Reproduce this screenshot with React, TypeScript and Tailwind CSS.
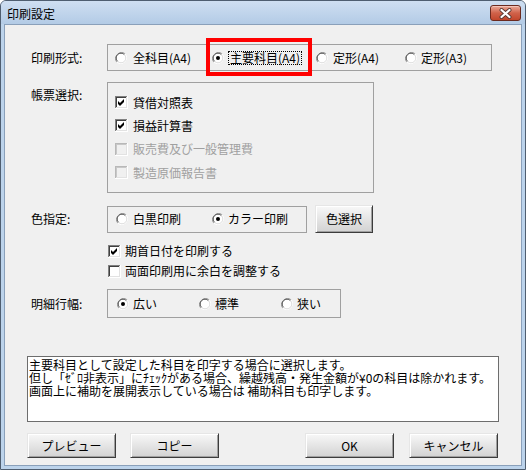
import React from "react";

function Radio({ checked }: { checked?: boolean }) {
  return (
    <svg width="12" height="12" viewBox="0 0 12 12" className="shrink-0">
      <circle cx="6" cy="6" r="5.5" fill="#fff" />
      <path d="M10.2 1.8 A6 6 0 0 0 1.8 10.2" stroke="#9a9a9a" strokeWidth="1" fill="none" />
      <path d="M9.4 2.6 A4.8 4.8 0 0 0 2.6 9.4" stroke="#555" strokeWidth="1" fill="none" />
      <path d="M1.8 10.2 A6 6 0 0 0 10.2 1.8" stroke="#ffffff" strokeWidth="1" fill="none" />
      <path d="M2.6 9.4 A4.8 4.8 0 0 0 9.4 2.6" stroke="#dcdcdc" strokeWidth="1" fill="none" />
      {checked && <circle cx="6" cy="6" r="2" fill="#000" />}
    </svg>
  );
}

function Check({ checked, disabled }: { checked?: boolean; disabled?: boolean }) {
  const o = disabled ? "#b8b8b8" : "#808080";
  const i = disabled ? "#c8c8c8" : "#404040";
  const fill = disabled ? "#f0f0f0" : "#ffffff";
  return (
    <svg width="13" height="13" viewBox="0 0 13 13" shapeRendering="crispEdges" className="shrink-0">
      <rect x="0" y="0" width="13" height="13" fill="#fff" />
      <rect x="0" y="0" width="12" height="1" fill={o} />
      <rect x="0" y="0" width="1" height="12" fill={o} />
      <rect x="1" y="1" width="10" height="1" fill={i} />
      <rect x="1" y="1" width="1" height="10" fill={i} />
      <rect x="1" y="11" width="11" height="1" fill="#e2e2e2" />
      <rect x="11" y="1" width="1" height="11" fill="#e2e2e2" />
      <rect x="2" y="2" width="9" height="9" fill={fill} />
      {checked && (
        <polygon points="3,5 5,7 9,3 9,6 5,10 3,8" fill={disabled ? "#a0a0a0" : "#000"} shapeRendering="auto" />
      )}
    </svg>
  );
}

function Btn({ children, w }: { children: React.ReactNode; w: string }) {
  return (
    <div
      className={`${w} h-full flex items-center justify-center border border-t-[#e6e6e6] border-l-[#e6e6e6] border-r-[#3c3c3c] border-b-[#3c3c3c] bg-linear-to-b from-[#f8f8f8] to-[#d2d2d2] shadow-[inset_1px_1px_0_#ffffff,inset_-1px_-1px_0_#a0a0a0] leading-[14px]`}
    >
      {children}
    </div>
  );
}

export default function App() {
  return (
    <div className="w-[526px] h-[470px] flex flex-col bg-[#bcd3eb] border border-[#4f5e70] rounded-t-[6px] overflow-hidden font-['Noto_Sans_CJK_JP','Liberation_Sans',sans-serif] text-[12px] text-black">
      {/* title bar */}
      <div className="h-[23px] shrink-0 flex items-start justify-between pl-[6px] pr-[4px] pt-[4px] bg-linear-to-b from-[#cfdff1] to-[#b3cbe6]">
        <span className="leading-[14px] mt-[2px]">印刷設定</span>
        <div className="w-[31px] h-[16px] rounded-[3px] border border-[#6b2a1f] bg-linear-to-b from-[#e8a898] via-[#d0624a] to-[#c2462c] flex items-center justify-center shadow-[inset_0_1px_0_#f3c4b8]">
          <svg width="13" height="11" viewBox="0 0 13 11">
            <path d="M2.5 2 L10.5 9 M10.5 2 L2.5 9" stroke="#5a3a34" strokeWidth="4" strokeLinecap="round" />
            <path d="M2.5 2 L10.5 9 M10.5 2 L2.5 9" stroke="#ffffff" strokeWidth="2.2" strokeLinecap="round" />
          </svg>
        </div>
      </div>

      {/* client area frame */}
      <div className="flex-1 flex px-[3px] pb-[3px]">
        <div className="flex-1 flex flex-col border border-[#8aa0ba] bg-[#f0f0f0] pt-[19px]">
          {/* 印刷形式 */}
          <div className="flex items-center pl-[26px]">
            <div className="w-[76px] leading-[14px]">印刷形式:</div>
            <div className="w-[385px] h-[27px] border border-[#a0a0a0] flex items-center pl-[7px]">
              <div className="w-[97px] flex items-center">
                <Radio />
                <span className="ml-[6px] leading-[14px]">全科目(A4)</span>
              </div>
              <div className="w-[104px] flex items-center relative">
                <Radio checked />
                <span className="ml-[4px] leading-[12px] border border-dotted border-black px-[1px]">主要科目(A4)</span>
                <span className="absolute left-[-6px] top-[-13px] w-[106px] h-[38px] border-[4px] border-[#ff0000]" />
              </div>
              <div className="w-[89px] flex items-center">
                <Radio />
                <span className="ml-[5px] leading-[14px]">定形(A4)</span>
              </div>
              <div className="flex items-center">
                <Radio />
                <span className="ml-[4px] leading-[14px]">定形(A3)</span>
              </div>
            </div>
          </div>

          {/* 帳票選択 */}
          <div className="flex items-start pl-[26px] mt-[11px]">
            <div className="w-[76px] leading-[14px] mt-[6px]">帳票選択:</div>
            <div className="w-[267px] h-[111px] border border-[#a0a0a0] flex flex-col pt-[8px] pl-[7px]">
              <div className="h-[23px] flex items-center gap-[5px]">
                <Check checked />
                <span className="leading-[14px]">貸借対照表</span>
              </div>
              <div className="h-[23px] flex items-center gap-[5px]">
                <Check checked />
                <span className="leading-[14px]">損益計算書</span>
              </div>
              <div className="h-[24px] flex items-center gap-[5px] text-[#a0a0a0]">
                <Check disabled />
                <span className="leading-[14px]">販売費及び一般管理費</span>
              </div>
              <div className="h-[23px] flex items-center gap-[5px] text-[#a0a0a0]">
                <Check disabled />
                <span className="leading-[14px]">製造原価報告書</span>
              </div>
            </div>
          </div>

          {/* 色指定 */}
          <div className="flex items-center pl-[26px] mt-[12px] h-[28px]">
            <div className="w-[76px] leading-[14px]">色指定:</div>
            <div className="w-[200px] h-[27px] border border-[#a0a0a0] flex items-center pl-[8px]">
              <div className="w-[96px] flex items-center">
                <Radio />
                <span className="ml-[5px] leading-[14px]">白黒印刷</span>
              </div>
              <div className="flex items-center">
                <Radio checked />
                <span className="ml-[4px] leading-[14px]">カラー印刷</span>
              </div>
            </div>
            <div className="ml-[8px] h-[28px]">
              <Btn w="w-[58px]">色選択</Btn>
            </div>
          </div>

          <div className="flex flex-col pl-[103px] mt-[8px]">
            <div className="h-[20px] flex items-center gap-[4px]">
              <Check checked />
              <span className="leading-[14px]">期首日付を印刷する</span>
            </div>
            <div className="h-[20px] flex items-center gap-[4px]">
              <Check />
              <span className="leading-[14px]">両面印刷用に余白を調整する</span>
            </div>
          </div>

          {/* 明細行幅 */}
          <div className="flex items-center pl-[26px] mt-[8px]">
            <div className="w-[76px] leading-[14px]">明細行幅:</div>
            <div className="w-[234px] h-[29px] border border-[#a0a0a0] flex items-center pl-[9px]">
              <div className="w-[82px] flex items-center">
                <Radio checked />
                <span className="ml-[4px] leading-[14px]">広い</span>
              </div>
              <div className="w-[82px] flex items-center">
                <Radio />
                <span className="ml-[4px] leading-[14px]">標準</span>
              </div>
              <div className="flex items-center">
                <Radio />
                <span className="ml-[4px] leading-[14px]">狭い</span>
              </div>
            </div>
          </div>

          {/* description */}
          <div className="ml-[22px] mt-[38px] w-[472px] h-[66px] border border-[#6d6d6d] bg-white pl-[1px] pt-[1px] leading-[13px] whitespace-nowrap overflow-hidden">
            <div>主要科目として設定した科目を印字する場合に選択します。</div>
            <div>但し「ｾﾞﾛ非表示」にﾁｪｯｸがある場合、繰越残高・発生金額が¥0の科目は除かれます。</div>
            <div>画面上に補助を展開表示している場合は 補助科目も印字します。</div>
          </div>

          {/* buttons */}
          <div className="flex pl-[22px] mt-[11px] h-[25px]">
            <Btn w="w-[89px]">プレビュー</Btn>
            <div className="ml-[14px] h-full">
              <Btn w="w-[89px]">コピー</Btn>
            </div>
            <div className="ml-[86px] h-full">
              <Btn w="w-[89px]">OK</Btn>
            </div>
            <div className="ml-[15px] h-full">
              <Btn w="w-[89px]">キャンセル</Btn>
            </div>
          </div>
        </div>
      </div>
    </div>
  );
}
